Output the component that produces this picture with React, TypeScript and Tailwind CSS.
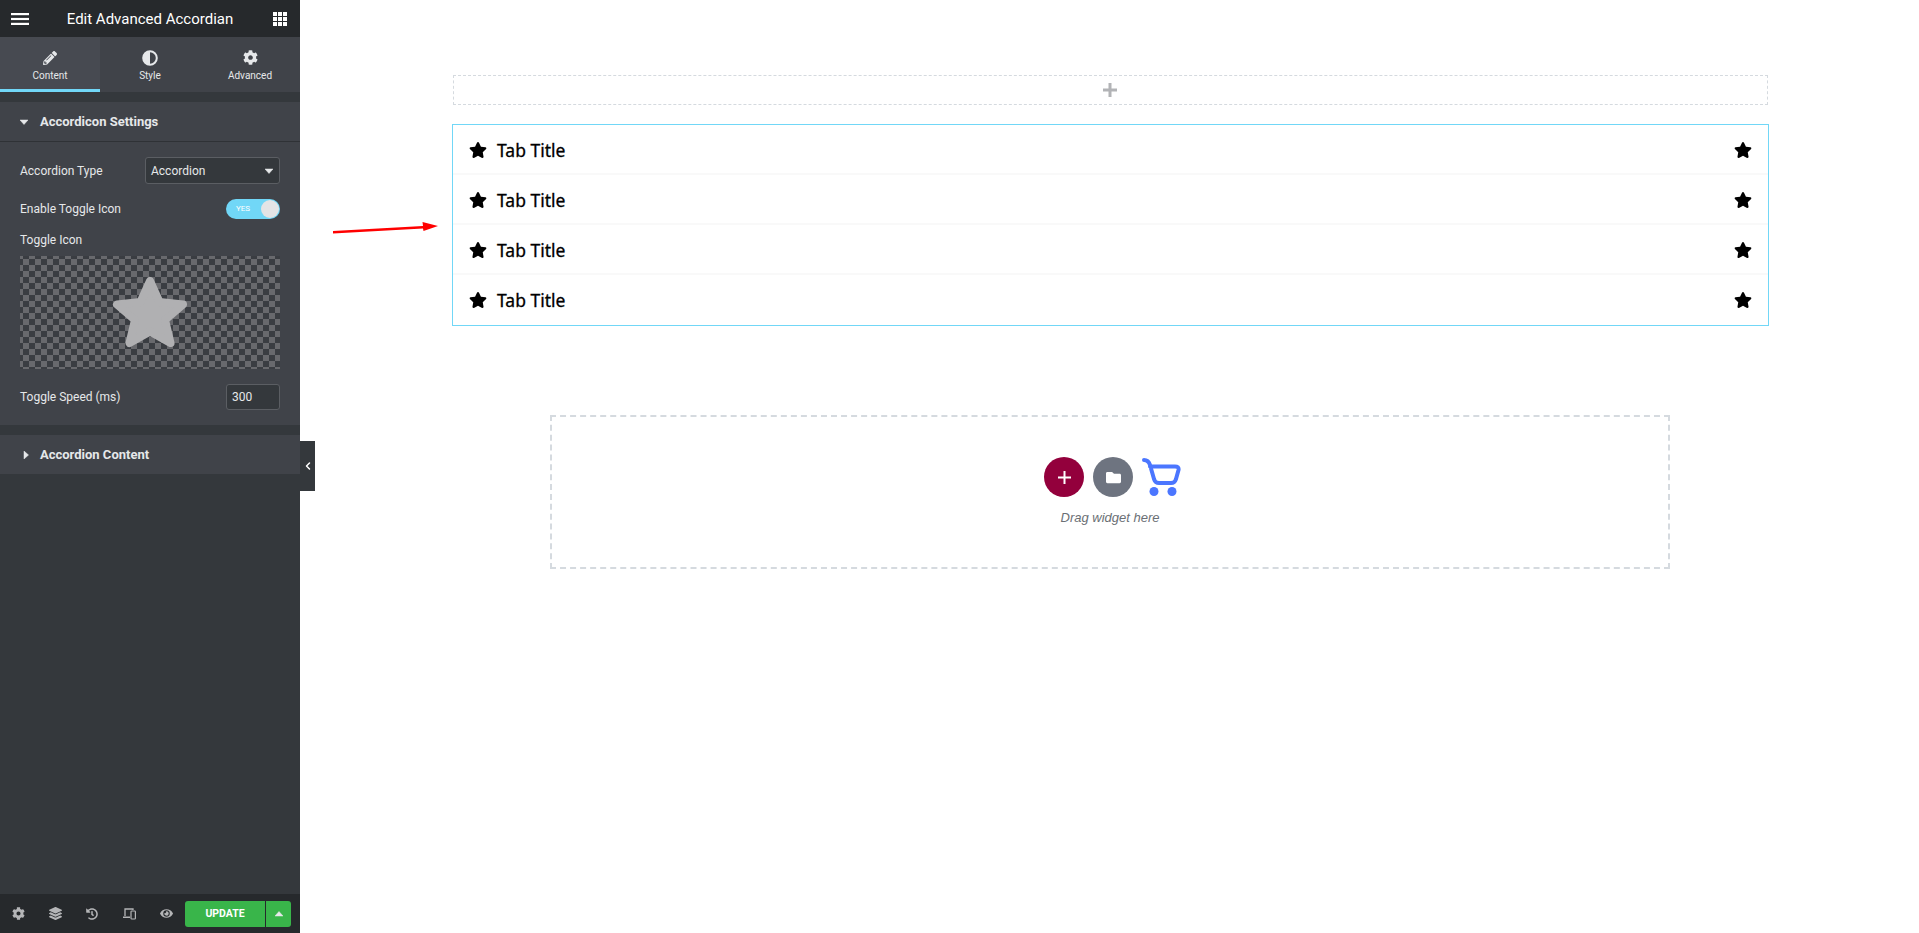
import React from "react";
import { ChevronLeft } from "lucide-react";
import { FaCog, FaPencilAlt, FaLayerGroup, FaHistory, FaEye, FaFolder } from "react-icons/fa";

const Caret = ({ dir = "down" }: { dir?: "down" | "right" | "up" }) => {
  const pts = dir === "down" ? "0,2 8,2 4,6.5" : dir === "up" ? "0,6 8,6 4,1.5" : "2,0 6.5,4 2,8";
  return (
    <svg width={8} height={8} viewBox="0 0 8 8" className="shrink-0">
      <polygon points={pts} fill="#e6e8ea" stroke="#e6e8ea" strokeWidth="0.5" strokeLinejoin="round" />
    </svg>
  );
};

const Star = ({ size, className }: { size: number; className?: string }) => (
  <svg width={size} height={size} viewBox="0 0 576 512" className={className}>
    <path
      fill="#000"
      d="M259.3 17.8L194 150.2 47.9 171.5c-26.2 3.8-36.7 36.1-17.7 54.6l105.7 103-25 145.5c-4.5 26.3 23.2 46 46.4 33.7L288 439.6l130.7 68.7c23.2 12.2 50.9-7.4 46.4-33.7l-25-145.5 105.7-103c19-18.5 8.5-50.8-17.7-54.6L382 150.2 316.7 17.8c-11.7-23.6-45.6-23.9-57.4 0z"
    />
  </svg>
);

const Row = ({ last }: { last?: boolean }) => (
  <div className={`flex h-[50px] items-center border-y-2 border-t-transparent pl-[16px] pr-[16px] ${last ? "border-b-transparent" : "border-b-[#f9f9f9]"}`}>
    <Star size={18} />
    <span className="ml-[10px] pt-[1px] font-['Noto_Sans',sans-serif] text-[17.5px] font-normal text-black [-webkit-text-stroke:0.3px_black]">Tab Title</span>
    <Star size={18} className="ml-auto" />
  </div>
);

const Tab = ({ label, active, children }: { label: string; active?: boolean; children: React.ReactNode }) => (
  <div className={`flex h-[55px] w-[100px] flex-col items-center border-b-[3px] pt-[12px] ${active ? "border-[#71d7f7] bg-[#474a51]" : "border-transparent"}`}>
    <div className="flex h-[17px] items-center">{children}</div>
    <span className="mt-[3px] text-[10px] leading-[13px] text-[#e6e8ea]">{label}</span>
  </div>
);

export default function App() {
  return (
    <div className="flex h-[933px] w-[1919px] overflow-hidden bg-white font-['Roboto',sans-serif]">
      <aside className="flex w-[300px] shrink-0 flex-col bg-[#34383c] text-[#e6e8ea]">
        <header className="grid h-[37px] grid-cols-[40px_1fr_40px] items-center bg-[#26292c]">
          <svg width="18" height="12" viewBox="0 0 18 12" className="ml-[11px]">
            <rect y="0" width="18" height="2.2" fill="#fff" />
            <rect y="4.9" width="18" height="2.2" fill="#fff" />
            <rect y="9.8" width="18" height="2.2" fill="#fff" />
          </svg>
          <span className="text-center text-[15px] leading-[34px] text-white">Edit Advanced Accordian</span>
          <svg width="14" height="14" viewBox="0 0 14 14" className="ml-[13px]">
            {[0, 5, 10].flatMap((y) =>
              [0, 5, 10].map((x) => <rect key={`${x}-${y}`} x={x} y={y} width="4" height="4" fill="#fff" />)
            )}
          </svg>
        </header>
        <nav className="flex h-[55px] bg-[#404349]">
          <Tab label="Content" active>
            <FaPencilAlt size={14} className="text-[#e6e8ea]" />
          </Tab>
          <Tab label="Style">
            <svg width="16" height="16" viewBox="0 0 16 16">
              <circle cx="8" cy="8" r="6.8" fill="none" stroke="#e6e8ea" strokeWidth="2" />
              <path d="M8 1.2a6.8 6.8 0 0 0 0 13.6z" fill="#e6e8ea" />
            </svg>
          </Tab>
          <Tab label="Advanced">
            <FaCog size={15} className="text-[#e6e8ea]" />
          </Tab>
        </nav>
        <div className="h-[10px] bg-[#34383c]" />
        <section className="bg-[#404349]">
          <div className="flex h-[40px] items-center gap-[12px] border-b border-[#2f3236] pl-[20px]">
            <Caret />
            <span className="text-[13px] font-bold text-[#e6e8ea]">Accordicon Settings</span>
          </div>
          <div className="px-[20px] pt-[15px]">
            <div className="flex h-[27px] items-center justify-between">
              <span className="text-[12px]">Accordion Type</span>
              <div className="flex h-[27px] w-[135px] items-center justify-between rounded-[3px] border border-[#5b5e63] bg-[#34383c] pl-[5px] pr-[6px] text-[12px]">
                Accordion
                <Caret />
              </div>
            </div>
            <div className="mt-[11px] flex h-[27px] items-center justify-between">
              <span className="text-[12px]">Enable Toggle Icon</span>
              <div className="flex h-[20px] w-[54px] items-center justify-between rounded-full bg-[#71d7f7] pl-[10px] pr-[1px]">
                <span className="text-[8px] text-white">YES</span>
                <span className="h-[18px] w-[18px] rounded-full bg-[#e3e4e6]" />
              </div>
            </div>
            <div className="mt-[10px] text-[12px] leading-[16px]">Toggle Icon</div>
            <div className="mt-[8px] flex h-[113px] items-center justify-center bg-[#68696d] bg-[repeating-conic-gradient(#3a3d42_0_25%,#68696d_0_50%)] bg-[length:12px_12px] bg-[position:3px_3px]">
              <svg width="76" height="72" viewBox="0 0 76 72" className="mt-[-2px]">
                <path
                  d="M38 5 L47.5 26 L71 28.5 L53 44 L58.5 67 L38 55.5 L17.5 67 L23 44 L5 28.5 L28.5 26 Z"
                  fill="#b0b0b2"
                  stroke="#b0b0b2"
                  strokeWidth="8"
                  strokeLinejoin="round"
                />
              </svg>
            </div>
            <div className="mt-[15px] flex h-[26px] items-center justify-between">
              <span className="text-[12px]">Toggle Speed (ms)</span>
              <div className="flex h-[26px] w-[54px] items-center rounded-[3px] border border-[#5b5e63] bg-[#34383c] pl-[5px] text-[12px]">300</div>
            </div>
          </div>
          <div className="h-[15px]" />
        </section>
        <div className="h-[10px]" />
        <section className="flex h-[39px] items-center gap-[12px] bg-[#404349] pl-[22px]">
          <Caret dir="right" />
          <span className="ml-[-2px] text-[13px] font-bold text-[#e6e8ea]">Accordion Content</span>
        </section>
        <div className="flex-1" />
        <footer className="flex h-[39px] items-center bg-[#26292c] pl-[12px] text-[#b4b5b7]">
          <FaCog size={13} />
          <FaLayerGroup size={13} className="ml-[24px]" />
          <FaHistory size={12} className="ml-[24px]" />
          <svg width="13" height="13" viewBox="0 0 13 13" className="ml-[25px]">
            <path d="M2 9V2h8v1" fill="none" stroke="#b4b5b7" strokeWidth="1.3" />
            <path d="M0 9.5h7V11H0z" fill="#b4b5b7" />
            <rect x="8" y="4" width="4.4" height="8" rx="0.8" fill="none" stroke="#b4b5b7" strokeWidth="1.2" />
          </svg>
          <FaEye size={13} className="ml-[24px]" />
          <div className="ml-[12px] flex h-[26px] w-[80px] items-center justify-center rounded-l-[3px] bg-[#39b54a] text-[10.5px] font-bold text-white">UPDATE</div>
          <div className="ml-px flex h-[26px] w-[25px] items-center justify-center rounded-r-[3px] bg-[#39b54a]">
            <Caret dir="up" />
          </div>
        </footer>
      </aside>

      <div className="relative flex h-[50px] w-[15px] shrink-0 translate-y-[441px] items-center justify-center bg-[#34383c]">
        <ChevronLeft size={12} strokeWidth={3} className="text-white" />
      </div>

      <main className="relative ml-[-15px] flex min-w-0 flex-1 flex-col items-center pl-[2px] pt-[75px]">
        <div className="flex h-[30px] w-[1315px] items-center justify-center border border-dashed border-[#d5dadf]">
          <svg width="14" height="14" viewBox="0 0 14 14" className="ml-[-1px]">
            <path d="M5.5 0h3v5.5H14v3H8.5V14h-3V8.5H0v-3h5.5z" fill="#b2b3b6" />
          </svg>
        </div>
        <div className="mt-[19px] w-[1317px] border border-[#71d7f7]">
          <Row />
          <Row />
          <Row />
          <Row last />
        </div>
        <div className="ml-[-2px] mt-[89px] flex h-[154px] w-[1120px] flex-col items-center border-2 border-dashed border-[#d5dadf] pt-[40px]">
          <div className="ml-[6px] flex items-center">
            <div className="flex h-[40px] w-[40px] items-center justify-center rounded-full bg-[#93003c]">
              <svg width="13" height="13" viewBox="0 0 13 13">
                <path d="M5.5 0h2v5.5H13v2H7.5V13h-2V7.5H0v-2h5.5z" fill="#fff" />
              </svg>
            </div>
            <div className="ml-[9px] flex h-[40px] w-[40px] items-center justify-center rounded-full bg-[#6e7480]">
              <FaFolder size={15} className="text-white" />
            </div>
            <svg width="40" height="40" viewBox="0 0 40 40" className="ml-[8px]">
              <path
                d="M3 3 C6 3 8 5 9 8 L13 22 C14 25 15 26 18 26 H30 C33 26 34 25 35 22 L37.5 13 C38 10.5 36.5 9.5 34 9.5 H9"
                fill="none"
                stroke="#4b76ff"
                strokeWidth="4"
                strokeLinecap="round"
                strokeLinejoin="round"
              />
              <circle cx="13" cy="34.5" r="4.5" fill="#4b76ff" />
              <circle cx="31" cy="34.5" r="4.5" fill="#4b76ff" />
            </svg>
          </div>
          <div className="ml-[1px] mt-[11px] font-['Liberation_Sans',sans-serif] text-[13px] italic text-[#6b6f75]">Drag widget here</div>
        </div>
        <svg width="110" height="14" viewBox="0 0 110 14" className="absolute left-[32px] top-[221px]">
          <path d="M1 10 L91 5 L90.5 1 L106 5 L91.5 10 L91 7.5 L1 12.5 Z" fill="#f00" />
        </svg>
      </main>
    </div>
  );
}
